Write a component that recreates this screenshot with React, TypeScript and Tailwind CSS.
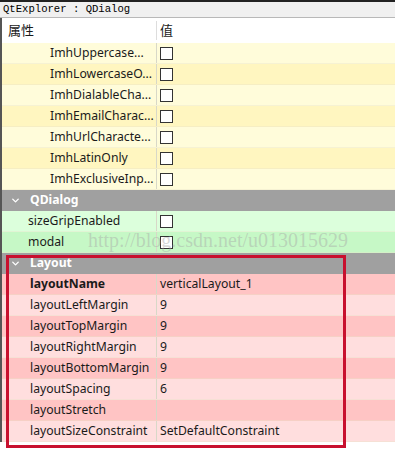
import { ChevronDown } from "lucide-react";

type Row = { name: string; value?: string; check?: boolean; bold?: boolean };

const imhRows: Row[] = [
  { name: "ImhUppercase...", check: true },
  { name: "ImhLowercaseO...", check: true },
  { name: "ImhDialableCha...", check: true },
  { name: "ImhEmailCharac...", check: true },
  { name: "ImhUrlCharacte...", check: true },
  { name: "ImhLatinOnly", check: true },
  { name: "ImhExclusiveInp...", check: true },
];

const dialogRows: Row[] = [
  { name: "sizeGripEnabled", check: true },
  { name: "modal", check: true },
];

const layoutRows: Row[] = [
  { name: "layoutName", value: "verticalLayout_1", bold: true },
  { name: "layoutLeftMargin", value: "9" },
  { name: "layoutTopMargin", value: "9" },
  { name: "layoutRightMargin", value: "9" },
  { name: "layoutBottomMargin", value: "9" },
  { name: "layoutSpacing", value: "6" },
  { name: "layoutStretch", value: "" },
  { name: "layoutSizeConstraint", value: "SetDefaultConstraint" },
];

function Check() {
  return <span className="block h-[13px] w-[13px] border border-[#333] bg-white" />;
}

function PropRow({ row, bg, indent }: { row: Row; bg: string; indent: string }) {
  return (
    <div className={"flex h-[21px] items-center border-b border-[#e8e4c8]/40 " + bg}>
      <div
        className={
          "flex h-full w-[155px] shrink-0 items-center whitespace-nowrap border-r border-[#d8d8c8] " +
          indent +
          (row.bold ? " font-bold" : "")
        }
      >
        {row.name}
      </div>
      <div className="flex h-full flex-1 items-center pl-[3px]">
        {row.check ? <Check /> : row.value}
      </div>
    </div>
  );
}

function Group({ title }: { title: string }) {
  return (
    <div className="flex h-[21px] items-center bg-[#a0a0a0] text-white">
      <ChevronDown className="ml-[8px] h-[11px] w-[11px]" strokeWidth={3} />
      <span className="ml-[9px] font-bold">{title}</span>
    </div>
  );
}

export default function App() {
  return (
    <div
      className="relative h-[454px] w-[395px] overflow-hidden bg-white text-[12.2px] text-[#1a1a1a]"
      style={{ fontFamily: '"Noto Sans", "Noto Sans CJK SC", sans-serif' }}
    >
      <div className="h-[2px] bg-[#222]" />
      <div
        className="flex h-[16px] items-center border-b border-[#b8b8b8] bg-[#f0f0f0] pl-[3px] text-[10.6px] text-black"
        style={{ fontFamily: '"Liberation Mono", monospace' }}
      >
        QtExplorer : QDialog
      </div>
      <div className="border-l-2 border-[#555]">
        <div className="flex h-[25px] items-center bg-white text-[13px]">
          <div className="w-[155px] border-r border-[#ddd] pl-[6px]">属性</div>
          <div className="pl-[3px]">值</div>
        </div>
        {imhRows.map((r, i) => (
          <PropRow
            key={r.name}
            row={r}
            indent="pl-[48px]"
            bg={i % 2 === 0 ? "bg-[#fffcda]" : "bg-[#fff6c0]"}
          />
        ))}
        <Group title="QDialog" />
        {dialogRows.map((r, i) => (
          <PropRow
            key={r.name}
            row={r}
            indent="pl-[26px]"
            bg={i % 2 === 0 ? "bg-[#dcffdc]" : "bg-[#c6f8c6]"}
          />
        ))}
        <Group title="Layout" />
        {layoutRows.map((r, i) => (
          <PropRow
            key={r.name}
            row={r}
            indent="pl-[28px]"
            bg={i % 2 === 0 ? "bg-[#ffc4c4]" : "bg-[#ffdede]"}
          />
        ))}
      </div>

      <div
        className="pointer-events-none absolute left-[88px] top-[225px] whitespace-nowrap text-[20px] text-[#a8a8a8]/45"
        style={{ fontFamily: '"Liberation Serif", serif' }}
      >
        http://blog.csdn.net/u013015629
      </div>

      <div className="pointer-events-none absolute left-[6px] top-[255px] h-[193px] w-[340px] border-[3px] border-[#c8102e]" />
    </div>
  );
}
